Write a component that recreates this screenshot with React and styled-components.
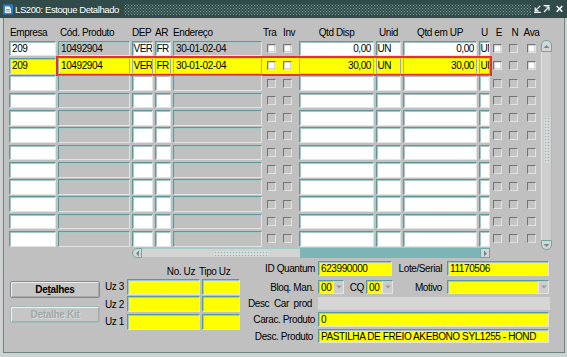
import React from 'react';
import styled, { createGlobalStyle, css } from 'styled-components';

const GlobalStyle = createGlobalStyle`
  html, body { margin: 0; padding: 0; }
  body { background: #c0c0c0; font-family: "Liberation Sans", Arial, sans-serif; }
  * { box-sizing: border-box; }
`;

const COLS = '47px 72px 21px 16px 89px 17px 14px 75px 25px 74px 11px 14px 14px 15px';

const Window = styled.div`
  width: 567px;
  height: 357px;
  display: flex;
  flex-direction: column;
  background: #cdd1d1;
  overflow: hidden;
  font-family: "Liberation Sans", Arial, sans-serif;
  font-size: 10px;
  letter-spacing: -0.4px;
  color: #000;
`;

const TitleBar = styled.div`
  flex: none;
  height: 18px;
  display: flex;
  align-items: center;
  padding: 0 4px 0 3px;
  background: #314b4b;
  color: #fff;
`;

const TitleText = styled.span`
  margin-left: 2px;
  font-size: 9.5px;
  white-space: nowrap;
  color: #fff;
`;

const Grip = styled.div`
  flex: 1;
  height: 11px;
  margin: 0 3px 0 5px;
  background-image:
    radial-gradient(circle, #819e9e 0 0.75px, transparent 1px),
    radial-gradient(circle, #819e9e 0 0.75px, transparent 1px);
  background-size: 3px 3px, 3px 3px;
  background-position: 0 0, 1.5px 1.5px;
`;

const TitleButtons = styled.div`
  display: flex;
  align-items: center;
  gap: 1px;
`;

const TitleGlyph = styled.svg`
  display: block;
  margin-left: ${p => p.$ml || 0}px;
`;

const Body = styled.div`
  flex: 1;
  display: flex;
  padding: 0 2px 4px 3px;
`;

const Panel = styled.div`
  flex: 1;
  display: flex;
  flex-direction: column;
  background: #c0c0c0;
  border: 1px solid #6f8383;
  border-top: none;
`;

const TableArea = styled.div`
  display: flex;
  align-items: flex-start;
  margin: 8px 0 0 5px;
`;

const Columns = styled.div`
  display: flex;
  flex-direction: column;
`;

const RowGrid = styled.div`
  display: grid;
  grid-template-columns: ${COLS};
  column-gap: 2px;
  height: ${p => p.$h}px;
  margin-top: ${p => p.$mt || 0}px;
`;

const DataRows = styled.div`
  display: flex;
  flex-direction: column;
  gap: 1.67px;
  margin-top: 1.67px;
`;

const HeadLabel = styled.span`
  grid-column: ${p => p.$c};
  grid-row: 1;
  align-self: center;
  justify-self: ${p => (p.$center ? 'center' : 'start')};
  white-space: nowrap;
  padding-left: ${p => p.$pl || 0}px;
  margin-left: ${p => p.$ml || 0}px;
`;

const fieldBase = css`
  background: ${p => p.$bg};
  border: 1px solid;
  border-color: #5d9999 #e4e4e4 #e4e4e4 #5d9999;
  box-shadow: inset 1px 1px 0 #a3c7c7;
  white-space: nowrap;
  overflow: hidden;
  display: flex;
  align-items: center;
  justify-content: ${p => (p.$right ? 'flex-end' : 'flex-start')};
  padding: 0 2px 0 2px;
`;

const GridField = styled.div`
  ${fieldBase}
  grid-column: ${p => p.$c};
  grid-row: 1;
  height: 100%;
  padding-left: ${p => (p.$tight ? 0.5 : 2)}px;
  padding-right: ${p => (p.$tight ? 0 : 2)}px;
  letter-spacing: ${p => (p.$tight ? '-0.5px' : '-0.4px')};
  ${p =>
    p.$sel &&
    css`
      border-color: #e0e000 #a8a8a8 #e0e000 #94b4b4;
      box-shadow: none;
    `}
`;

const Highlight = styled.div`
  grid-column: 2 / 12;
  grid-row: 1;
  margin: -2px;
  background: #ffff00;
  border: 2px solid #e3312f;
`;

const Check = styled.span`
  grid-column: ${p => p.$c};
  grid-row: 1;
  align-self: center;
  justify-self: start;
  margin-left: ${p => p.$ml}px;
  width: 9px;
  height: 9px;
  background: ${p => (p.$white ? '#ffffff' : '#c4c4c4')};
  border: 1px solid;
  border-color: #747474 #e2e2e2 #e2e2e2 #747474;
  box-shadow: ${p => (p.$white ? 'inset 0 0 0 0.5px #b0b0b0' : 'none')};
`;

const HScroll = styled.div`
  grid-column: 3 / 12;
  grid-row: 1;
  display: flex;
  height: 10px;
`;

const ScrollBtn = styled.div`
  flex: none;
  width: ${p => p.$w}px;
  height: ${p => p.$h}px;
  display: flex;
  align-items: center;
  justify-content: center;
  background: #d2d6d6;
  border: 1px solid #6fa6a6;
  border-radius: ${p => p.$radius};
`;

const Thumb = styled.div`
  flex: none;
  width: ${p => p.$w}px;
  background: #d3d3d3;
  border-top: 1px solid #a9c9c9;
  border-bottom: 1px solid #a9c9c9;
  display: flex;
  align-items: center;
  justify-content: center;
  padding-left: 40px;
`;

const Track = styled.div`
  flex: 1;
  background: #7cb5b5;
`;

const Dots = styled.div`
  width: ${p => p.$w}px;
  height: ${p => p.$h}px;
  background-image:
    radial-gradient(circle, #8fb9b9 0 0.7px, transparent 0.9px),
    radial-gradient(circle, #ffffff 0 0.7px, transparent 0.9px);
  background-size: 3px 3px, 3px 3px;
  background-position: 0 0, 1.5px 1.5px;
`;

const VScroll = styled.div`
  flex: none;
  width: 11px;
  height: 210px;
  margin: 14px 0 0 2px;
  display: flex;
  flex-direction: column;
`;

const VBody = styled.div`
  flex: 1;
  background: #cfcfcf;
  border-left: 1px solid #e2e2e2;
  border-right: 1px solid #b8b8b8;
  display: flex;
  justify-content: center;
  padding-top: 65px;
`;

const Bottom = styled.div`
  display: flex;
  align-items: flex-start;
  margin-top: 1px;
  padding-left: 6px;
`;

const ButtonsCol = styled.div`
  width: 90px;
  display: flex;
  flex-direction: column;
  gap: 8px;
  padding-top: 22px;
`;

const ActionButton = styled.button`
  width: 90px;
  height: 17px;
  margin: 0;
  padding: 0;
  font-family: "Liberation Sans", Arial, sans-serif;
  font-size: 10px;
  font-weight: bold;
  letter-spacing: -0.3px;
  color: ${p => (p.disabled ? '#9fa9a9' : '#000')};
  text-shadow: ${p => (p.disabled ? '1px 1px 0 #dcdcdc' : 'none')};
  background: #c6c6c6;
  border: 1px solid ${p => (p.disabled ? '#a2bcbc' : '#7d8d8d')};
  border-radius: 2px;
  box-shadow: inset 1px 1px 0 #f0f0f0, inset -1px -1px 0 #a9a9a9;
`;

const UzCol = styled.div`
  display: grid;
  grid-template-columns: 25px 73px 38px;
  grid-template-rows: 12px 16px 16px 16px;
  column-gap: 2px;
  row-gap: 1.5px;
  padding-top: 6px;
  margin-left: 0;
`;

const UzHead = styled.span`
  grid-column: ${p => p.$c};
  align-self: center;
  white-space: nowrap;
  text-align: ${p => p.$align};
  padding-right: ${p => p.$pr || 0}px;
  margin-left: ${p => p.$ml || 0}px;
`;

const UzLabel = styled.span`
  align-self: center;
  text-align: right;
  padding-right: 1px;
  white-space: nowrap;
`;

const BoxField = styled.div`
  ${fieldBase}
  width: ${p => (p.$w ? `${p.$w}px` : 'auto')};
  height: 100%;
  flex: none;
  align-items: ${p => (p.$top ? 'flex-start' : 'center')};
  padding-top: ${p => (p.$top ? 1 : 0)}px;
`;

const PlainField = styled.div`
  width: ${p => p.$w}px;
  height: 100%;
  flex: none;
  background: #d6d6d6;
`;

const FormCol = styled.div`
  display: flex;
  flex-direction: column;
  padding-top: 2px;
`;

const FormRow = styled.div`
  display: flex;
  align-items: center;
  height: ${p => p.$h}px;
  margin-top: ${p => p.$mt || 0}px;
`;

const FormLabel = styled.span`
  flex: none;
  width: ${p => p.$w}px;
  padding-right: ${p => p.$pr}px;
  text-align: right;
  white-space: pre;
`;

const ComboBox = styled.div`
  width: ${p => p.$w}px;
  height: 100%;
  flex: none;
  display: flex;
  background: #ffff00;
  border: 1px solid;
  border-color: #5d9999 #e4e4e4 #e4e4e4 #5d9999;
  box-shadow: inset 1px 1px 0 #a3c7c7;
`;

const ComboText = styled.span`
  flex: 1;
  display: flex;
  align-items: center;
  padding-left: 2px;
  white-space: nowrap;
  overflow: hidden;
`;

const ComboArrow = styled.span`
  flex: none;
  width: 10px;
  display: flex;
  align-items: center;
  justify-content: center;
  background: #cdcdcd;
  border-left: 1px solid #e6e6e6;
`;

const Combo = ({ w, value }) => (
  <ComboBox $w={w}>
    <ComboText>{value}</ComboText>
    <ComboArrow>
      <svg width="6" height="4" viewBox="0 0 6 4">
        <path d="M0 0.5h6L3 3.5z" fill="#9d9d9d" />
      </svg>
    </ComboArrow>
  </ComboBox>
);

const Tri = ({ dir }) => {
  const d = {
    left: 'M4 0.5v6L1 3.5z',
    right: 'M1 0.5v6L4 3.5z',
    up: 'M0.5 4h6L3.5 1z',
    down: 'M0.5 1h6L3.5 4z',
  }[dir];
  const vertical = dir === 'up' || dir === 'down';
  return (
    <svg width={vertical ? 7 : 5} height={vertical ? 5 : 7} viewBox={vertical ? '0 0 7 5' : '0 0 5 7'}>
      <path d={d} fill="#7c8a8a" />
    </svg>
  );
};

const W = '#ffffff';
const G = '#c0c0c0';
const Y = '#ffff00';

const empty = { emp: '', cod: '', dep: '', ar: '', end: '', disp: '', unid: '', up: '', u: '' };
const rows = [
  { emp: '209', cod: '10492904', dep: 'VER', ar: 'FR', end: '30-01-02-04', disp: '0,00', unid: 'UN', up: '0,00', u: 'UN', active: true },
  { emp: '209', cod: '10492904', dep: 'VER', ar: 'FR', end: '30-01-02-04', disp: '30,00', unid: 'UN', up: '30,00', u: 'UN', active: true, sel: true },
  ...Array.from({ length: 10 }, () => ({ ...empty })),
];

const DataRow = ({ r }) => {
  const bg = base => (r.sel ? Y : base);
  return (
    <RowGrid $h={15.67}>
      {r.sel && <Highlight />}
      <GridField $c={1} $bg={bg(W)}>{r.emp}</GridField>
      <GridField $c={2} $bg={bg(G)} $sel={r.sel}>{r.cod}</GridField>
      <GridField $c={3} $bg={bg(W)} $sel={r.sel} $tight>{r.dep}</GridField>
      <GridField $c={4} $bg={bg(W)} $sel={r.sel} $tight>{r.ar}</GridField>
      <GridField $c={5} $bg={bg(G)} $sel={r.sel}>{r.end}</GridField>
      <Check $c={6} $ml={3} $white={r.active} />
      <Check $c={7} $ml={0} $white={r.active} />
      <GridField $c={8} $bg={bg(W)} $sel={r.sel} $right>{r.disp}</GridField>
      <GridField $c={9} $bg={bg(W)} $sel={r.sel} $tight>{r.unid}</GridField>
      <GridField $c={10} $bg={bg(W)} $sel={r.sel} $right>{r.up}</GridField>
      <GridField $c={11} $bg={bg(W)} $sel={r.sel} $tight>{r.u}</GridField>
      <Check $c={12} $ml={1} $white={r.active} />
      <Check $c={13} $ml={1} $white={false} />
      <Check $c={14} $ml={3} $white={r.active} />
    </RowGrid>
  );
};

export default function App() {
  return (
    <>
      <GlobalStyle />
      <Window>
        <TitleBar>
          <svg width="10" height="11" viewBox="0 0 10 11">
            <rect x="0" y="0.5" width="10" height="10" rx="1" fill="#2a7fd0" />
            <path d="M2 2.5h4l2 2v4.5H2z" fill="#ffffff" />
            <path d="M3 5.5h4M3 7.2h4" stroke="#2a7fd0" strokeWidth="0.8" />
          </svg>
          <TitleText>LS200: Estoque Detalhado</TitleText>
          <Grip />
          <TitleButtons>
            <TitleGlyph width="7" height="8" viewBox="0 0 7 8" fill="none" stroke="#ffffff" strokeWidth="1.2">
              <path d="M6.2 0.8L1.6 5.4" />
              <path d="M1.2 2.4V5.8H4.6" />
              <path d="M0 7.4H7" />
            </TitleGlyph>
            <TitleGlyph width="7" height="8" viewBox="0 0 7 8" fill="none" stroke="#ffffff" strokeWidth="1.2" $ml={1}>
              <path d="M0.6 0.6H6.6" />
              <path d="M1 7L5.8 2.2" />
              <path d="M2.6 2H6V5.4" />
            </TitleGlyph>
            <TitleGlyph width="7" height="8" viewBox="0 0 7 8" fill="none" stroke="#ffffff" strokeWidth="1.6" $ml={5}>
              <path d="M0.7 1L6.3 6.8M6.3 1L0.7 6.8" />
            </TitleGlyph>
          </TitleButtons>
        </TitleBar>
        <Body>
          <Panel>
            <TableArea>
              <Columns>
                <RowGrid $h={13}>
                  <HeadLabel $c={1} $pl={1}>Empresa</HeadLabel>
                  <HeadLabel $c={2} $pl={2}>Cód. Produto</HeadLabel>
                  <HeadLabel $c={3}>DEP</HeadLabel>
                  <HeadLabel $c={4}>AR</HeadLabel>
                  <HeadLabel $c={5}>Endereço</HeadLabel>
                  <HeadLabel $c={6} $ml={-1}>Tra</HeadLabel>
                  <HeadLabel $c={7}>Inv</HeadLabel>
                  <HeadLabel $c={8} $center>Qtd Disp</HeadLabel>
                  <HeadLabel $c={9} $center>Unid</HeadLabel>
                  <HeadLabel $c={10} $center>Qtd em UP</HeadLabel>
                  <HeadLabel $c={11} $center>U</HeadLabel>
                  <HeadLabel $c={12} $center>E</HeadLabel>
                  <HeadLabel $c={13} $center>N</HeadLabel>
                  <HeadLabel $c={14} $center>Ava</HeadLabel>
                </RowGrid>
                <DataRows>
                  {rows.map((r, i) => (
                    <DataRow key={i} r={r} />
                  ))}
                </DataRows>
                <RowGrid $h={10} $mt={1.67}>
                  <HScroll>
                    <ScrollBtn $w={10} $h={10} $radius="5px 0 0 5px">
                      <Tri dir="left" />
                    </ScrollBtn>
                    <Thumb $w={158}>
                      <Dots $w={55} $h={5} />
                    </Thumb>
                    <Track />
                    <ScrollBtn $w={10} $h={10} $radius="0">
                      <Tri dir="right" />
                    </ScrollBtn>
                  </HScroll>
                </RowGrid>
              </Columns>
              <VScroll>
                <ScrollBtn $w={11} $h={12} $radius="5px 5px 0 0">
                  <Tri dir="up" />
                </ScrollBtn>
                <VBody>
                  <Dots $w={6} $h={46} />
                </VBody>
                <ScrollBtn $w={11} $h={10} $radius="0 0 5px 5px">
                  <Tri dir="down" />
                </ScrollBtn>
              </VScroll>
            </TableArea>
            <Bottom>
              <ButtonsCol>
                <ActionButton>
                  De<u>t</u>alhes
                </ActionButton>
                <ActionButton disabled>Detalhe Kit</ActionButton>
              </ButtonsCol>
              <UzCol>
                <UzHead $c={2} $align="right" $pr={5}>No. Uz</UzHead>
                <UzHead $c={3} $align="left" $ml={-3}>Tipo Uz</UzHead>
                {['Uz 3', 'Uz 2', 'Uz 1'].map(l => (
                  <React.Fragment key={l}>
                    <UzLabel>{l}</UzLabel>
                    <BoxField $bg={Y} />
                    <BoxField $bg={Y} />
                  </React.Fragment>
                ))}
              </UzCol>
              <FormCol>
                <FormRow $h={15}>
                  <FormLabel $w={78} $pr={3}>ID Quantum</FormLabel>
                  <BoxField $w={74} $bg={Y}>623990000</BoxField>
                  <FormLabel $w={55} $pr={5}>Lote/Serial</FormLabel>
                  <BoxField $w={102} $bg={Y}>11170506</BoxField>
                </FormRow>
                <FormRow $h={14} $mt={4}>
                  <FormLabel $w={78} $pr={4}>Bloq. Man.</FormLabel>
                  <Combo w={26} value="00" />
                  <FormLabel $w={22} $pr={2}>CQ</FormLabel>
                  <Combo w={27} value="00" />
                  <FormLabel $w={54} $pr={5}>Motivo</FormLabel>
                  <Combo w={102} value="" />
                </FormRow>
                <FormRow $h={13} $mt={3}>
                  <FormLabel $w={78} $pr={6}>Desc  Car  prod</FormLabel>
                  <PlainField $w={232} />
                </FormRow>
                <FormRow $h={15} $mt={2}>
                  <FormLabel $w={78} $pr={3}>Carac. Produto</FormLabel>
                  <BoxField $w={231} $bg={Y} $top>0</BoxField>
                </FormRow>
                <FormRow $h={14} $mt={2}>
                  <FormLabel $w={78} $pr={5}>Desc. Produto</FormLabel>
                  <BoxField $w={231} $bg={Y}>PASTILHA DE FREIO AKEBONO SYL1255 - HOND</BoxField>
                </FormRow>
              </FormCol>
            </Bottom>
          </Panel>
        </Body>
      </Window>
    </>
  );
}
